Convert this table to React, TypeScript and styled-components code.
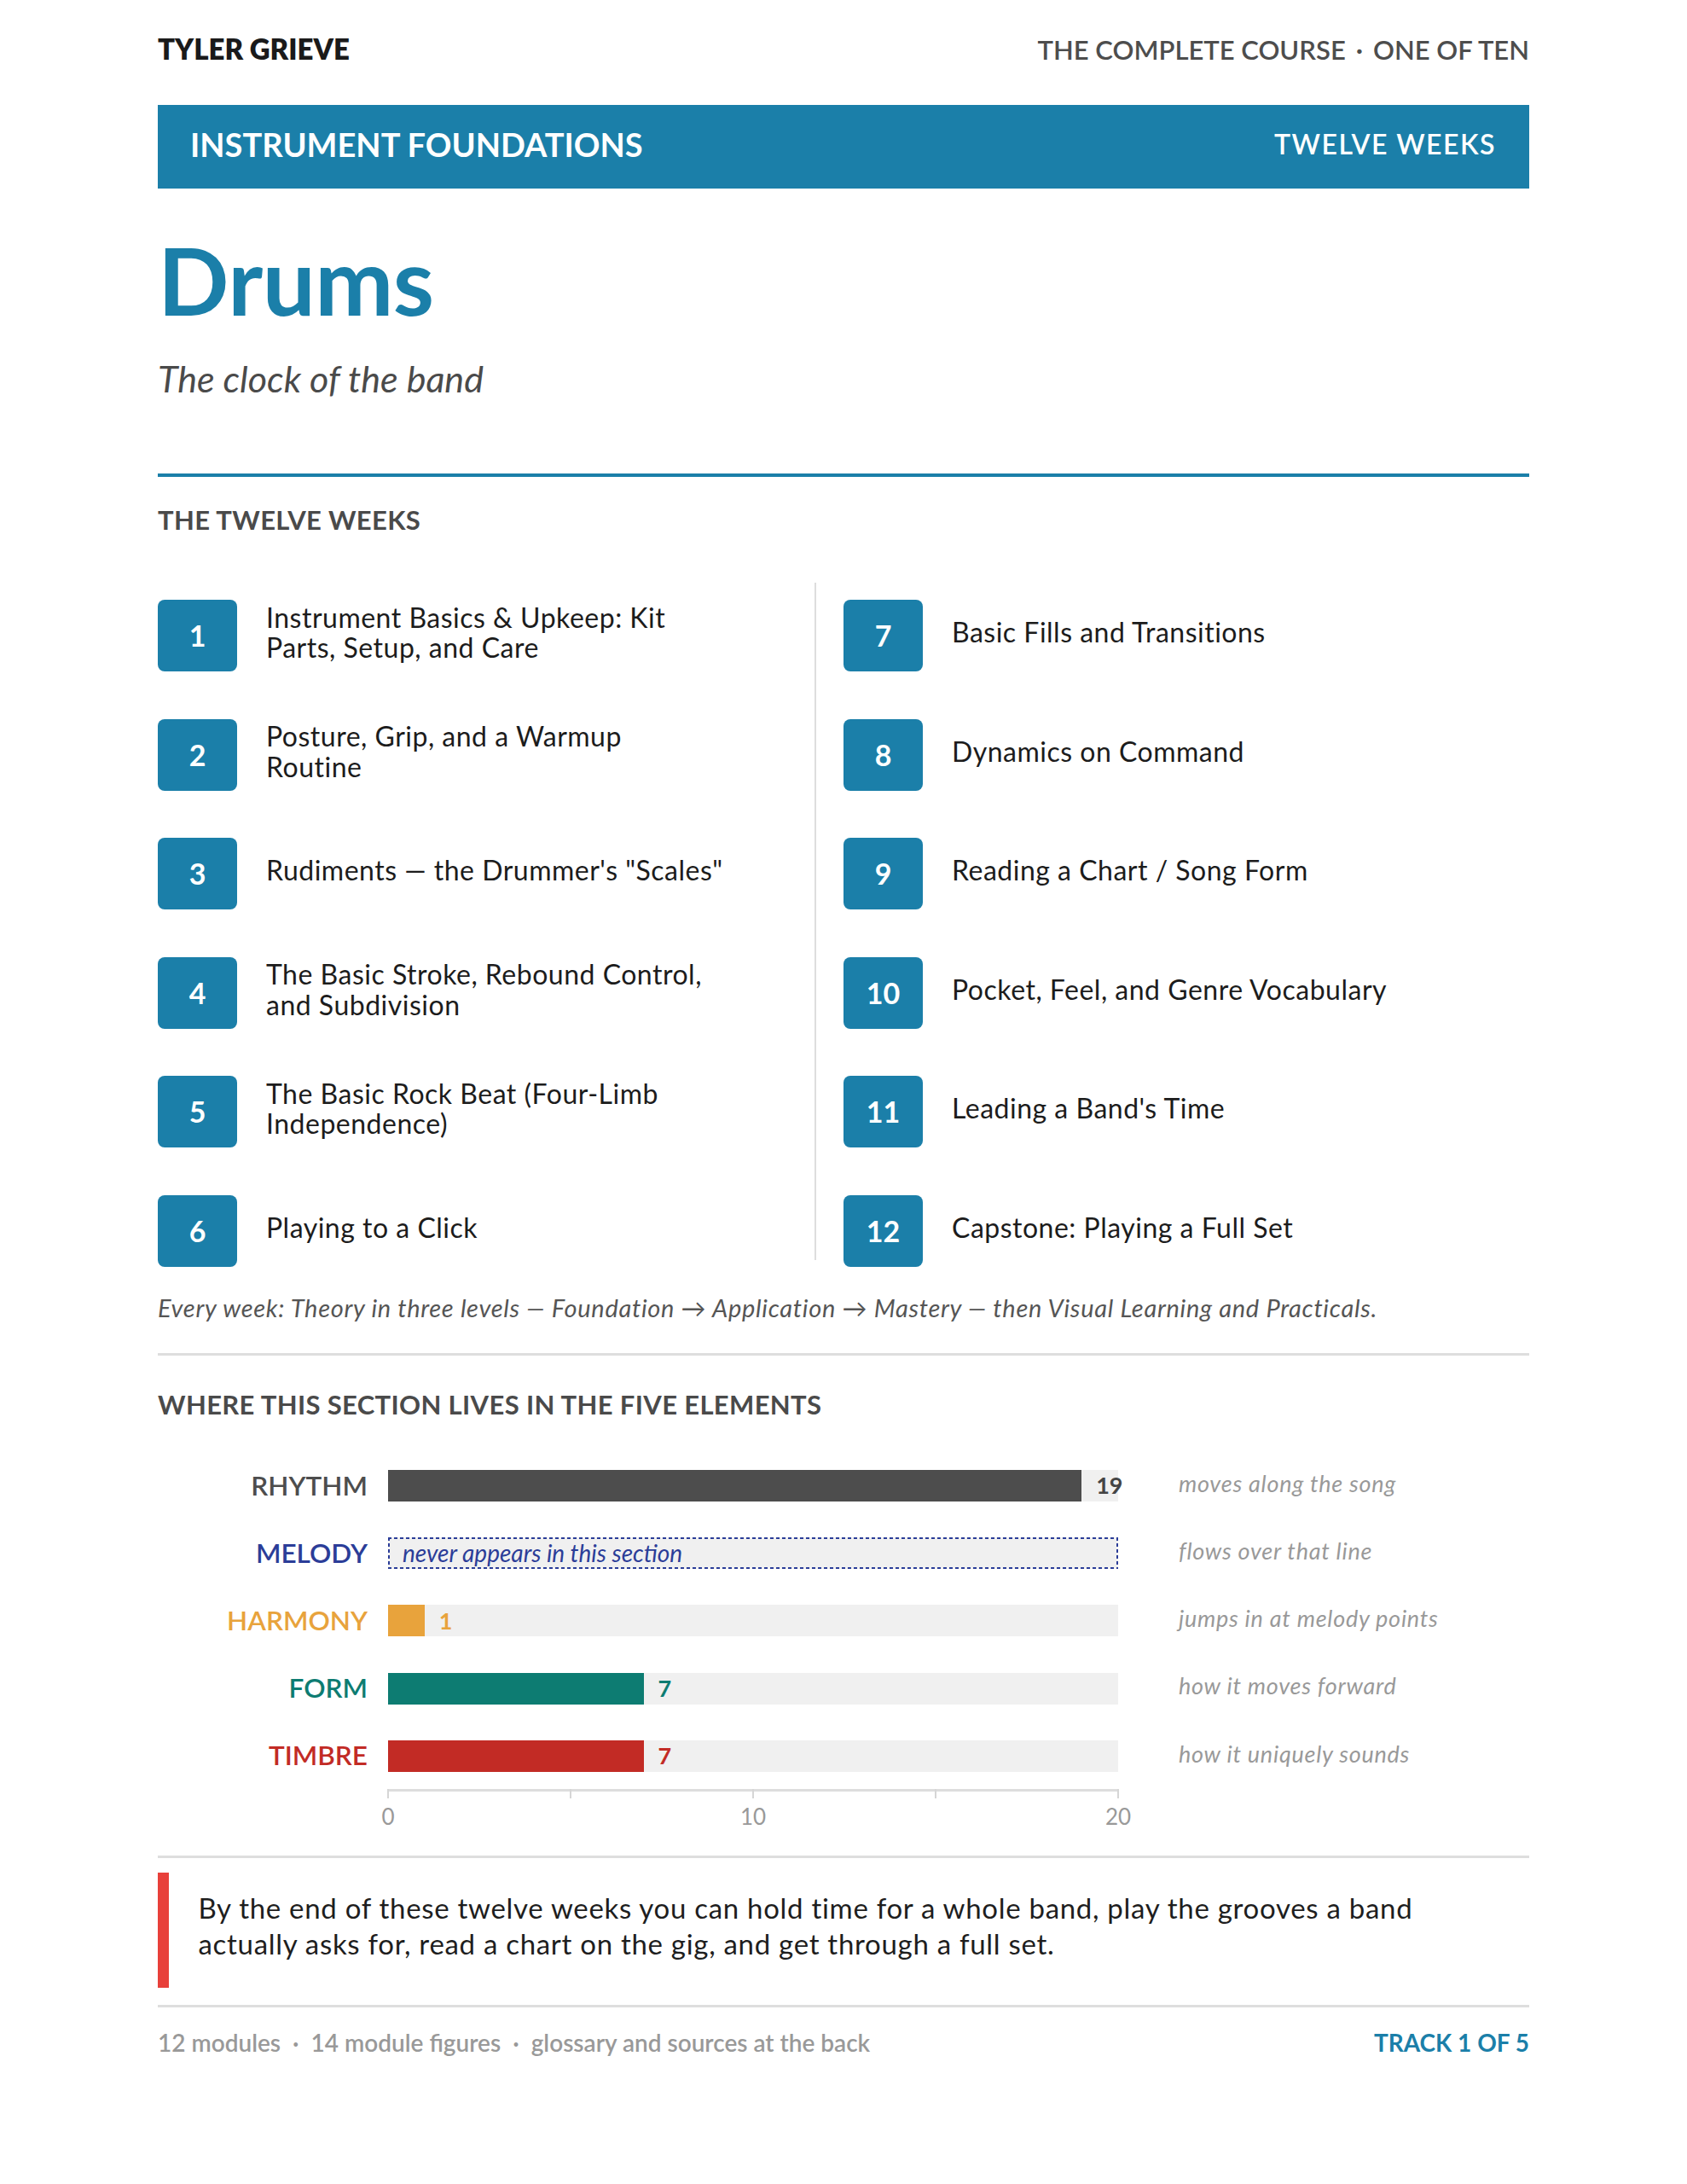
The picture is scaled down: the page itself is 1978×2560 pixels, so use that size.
import React from "react";
import styled, { createGlobalStyle } from "styled-components";

const BLUE = "#1b7fa9";

const Global = createGlobalStyle`
  html, body { margin: 0; padding: 0; background: #ffffff; }
  body { font-family: Lato, "Noto Sans", "Liberation Sans", sans-serif; color: #1c1c1c; }
  * { box-sizing: border-box; }
`;

const Page = styled.div`
  width: 1608px;
  margin: 0 auto;
  padding: 38px 0 80px;
  font-family: Lato, "Noto Sans", "Liberation Sans", sans-serif;
`;

const TopBar = styled.header`
  display: flex;
  justify-content: space-between;
  align-items: baseline;
  line-height: 1.2;
  height: 38.4px;
`;

const Brand = styled.div`
  font-size: 33px;
  font-weight: 800;
  color: #1a1a1a;
`;

const Series = styled.div`
  font-size: 31px;
  font-weight: 600;
  color: #4d4d4d;
`;

const Dot = styled.span<{ $gap?: number }>`
  display: inline-block;
  margin: 0 ${(p) => p.$gap ?? 12}px;
`;

const Banner = styled.div`
  margin-top: 47px;
  height: 98px;
  background: ${BLUE};
  display: flex;
  justify-content: space-between;
  align-items: center;
  padding: 0 39px 6px 38px;
  color: #ffffff;
  line-height: 1.2;
`;

const BannerText = styled.span<{ $weight: number; $size: number; $spacing?: number }>`
  font-size: ${(p) => p.$size}px;
  font-weight: ${(p) => p.$weight};
  letter-spacing: ${(p) => p.$spacing ?? 0}px;
`;

const Title = styled.h1`
  margin: 50.7px 0 0;
  font-size: 110px;
  line-height: 1;
  font-weight: 700;
  color: ${BLUE};
  letter-spacing: -0.5px;
`;

const Subtitle = styled.p`
  margin: 36px 0 0;
  font-size: 43px;
  line-height: 1.2;
  font-style: italic;
  font-weight: 400;
  color: #4a4a4a;
`;

const Rule = styled.hr<{ $color: string; $size: number; $top: number }>`
  margin: ${(p) => p.$top}px 0 0;
  border: 0;
  height: ${(p) => p.$size}px;
  background: ${(p) => p.$color};
`;

const SectionHeading = styled.h2<{ $top: number }>`
  margin: ${(p) => p.$top}px 0 0;
  font-size: 31px;
  line-height: 36px;
  font-weight: 700;
  letter-spacing: 0.35px;
  color: #4a4a4a;
`;

const Weeks = styled.div`
  margin-top: 56.6px;
  display: grid;
  grid-template-columns: 738px 2px 1fr;
  column-gap: 32px;
`;

const WeekColumn = styled.div`
  padding-top: 20px;
  display: flex;
  flex-direction: column;
  gap: 55.5px;
`;

const Divider = styled.div`
  background: #dddddd;
  margin-bottom: 7.5px;
`;

const WeekRow = styled.div`
  display: flex;
  align-items: center;
  gap: 34px;
  height: 84px;
`;

const Badge = styled.div`
  flex: 0 0 93px;
  height: 84px;
  border-radius: 8px;
  background: ${BLUE};
  color: #ffffff;
  display: flex;
  align-items: center;
  justify-content: center;
  font-size: 34px;
  font-weight: 700;
  line-height: 1;
`;

const WeekTitle = styled.div`
  margin-bottom: 8px;
  font-size: 32px;
  line-height: 35.7px;
  letter-spacing: 0.5px;
  font-weight: 400;
  color: #1c1c1c;
  white-space: pre-line;
`;

const Note = styled.p`
  margin: 31px 0 0;
  font-size: 29px;
  line-height: 34.8px;
  letter-spacing: 0.7px;
  font-style: italic;
  color: #555555;
`;

const Chart = styled.div`
  margin-top: 59px;
  display: flex;
  flex-direction: column;
  gap: 42.2px;
`;

const ChartRow = styled.div`
  display: grid;
  grid-template-columns: 246px 856px 1fr;
  column-gap: 24px;
  align-items: center;
  height: 37px;
`;

const ElementLabel = styled.div<{ $color: string }>`
  text-align: right;
  font-size: 31.5px;
  line-height: 1.2;
  font-weight: 600;
  color: ${(p) => p.$color};
`;

const Track = styled.div`
  position: relative;
  height: 37px;
  background: #f0f0f0;
`;

const Fill = styled.div<{ $color: string }>`
  height: 100%;
  background: ${(p) => p.$color};
`;

const Value = styled.span<{ $color: string }>`
  position: absolute;
  top: 50%;
  transform: translateY(-50%);
  margin-left: 17px;
  font-size: 27px;
  line-height: 1.2;
  font-weight: 700;
  color: ${(p) => p.$color};
`;

const EmptyTrack = styled.div<{ $color: string }>`
  height: 37px;
  display: flex;
  align-items: center;
  padding-left: 17px;
  font-size: 28px;
  font-style: italic;
  line-height: 1.2;
  color: ${(p) => p.$color};
  background:
    repeating-linear-gradient(90deg, ${(p) => p.$color} 0 4px, transparent 4px 7px) left top / 100% 2px no-repeat,
    repeating-linear-gradient(90deg, ${(p) => p.$color} 0 4px, transparent 4px 7px) left bottom / 100% 2px no-repeat,
    repeating-linear-gradient(180deg, ${(p) => p.$color} 0 4px, transparent 4px 7px) left top / 2px 100% no-repeat,
    repeating-linear-gradient(180deg, ${(p) => p.$color} 0 4px, transparent 4px 7px) right top / 2px 100% no-repeat,
    #f0f0f0;
`;

const Desc = styled.div`
  padding: 0 0 5px 47px;
  font-size: 27px;
  line-height: 1.2;
  letter-spacing: 0.75px;
  font-style: italic;
  color: #999999;
`;

const AxisRow = styled.div`
  display: grid;
  grid-template-columns: 246px 856px 1fr;
  column-gap: 24px;
  margin-top: -21.5px;
`;

const Axis = styled.div`
  grid-column: 2;
  position: relative;
  height: 48px;
  border-top: 3px solid #dddddd;
`;

const Tick = styled.div`
  position: absolute;
  top: -3px;
  width: 2px;
  height: 11px;
  margin-left: -1px;
  background: #d6d6d6;
`;

const TickLabel = styled.span`
  position: absolute;
  top: 14px;
  transform: translateX(-50%);
  font-size: 26px;
  line-height: 1.2;
  color: #999999;
`;

const Callout = styled.div`
  margin-top: 17px;
  border-left: 13px solid #e8403a;
  padding: 20px 0 31px 34.5px;
`;

const CalloutText = styled.p`
  margin: 0;
  max-width: 1480px;
  font-size: 33px;
  line-height: 42px;
  letter-spacing: 0.7px;
  color: #1e1e1e;
`;

const Footer = styled.footer`
  margin-top: 25px;
  display: flex;
  justify-content: space-between;
  align-items: baseline;
  font-size: 28px;
  line-height: 1.2;
  font-weight: 600;
`;

const FooterMeta = styled.div`
  color: #999999;
`;

const FooterTrack = styled.div`
  color: ${BLUE};
  font-weight: 700;
`;

const left = [
  "Instrument Basics & Upkeep: Kit\nParts, Setup, and Care",
  "Posture, Grip, and a Warmup\nRoutine",
  "Rudiments \u2014 the Drummer's \"Scales\"",
  "The Basic Stroke, Rebound Control,\nand Subdivision",
  "The Basic Rock Beat (Four-Limb\nIndependence)",
  "Playing to a Click",
];
const right = [
  "Basic Fills and Transitions",
  "Dynamics on Command",
  "Reading a Chart / Song Form",
  "Pocket, Feel, and Genre Vocabulary",
  "Leading a Band's Time",
  "Capstone: Playing a Full Set",
];

type El = { name: string; color: string; value: number | null; desc: string; valueColor: string };
const elements: El[] = [
  { name: "RHYTHM", color: "#4d4d4d", valueColor: "#444444", value: 19, desc: "moves along the song" },
  { name: "MELODY", color: "#2b3d98", valueColor: "#2b3d98", value: null, desc: "flows over that line" },
  { name: "HARMONY", color: "#e8a33c", valueColor: "#e8a33c", value: 1, desc: "jumps in at melody points" },
  { name: "FORM", color: "#0d7c72", valueColor: "#0d7c72", value: 7, desc: "how it moves forward" },
  { name: "TIMBRE", color: "#c22b25", valueColor: "#c22b25", value: 7, desc: "how it uniquely sounds" },
];
const MAX = 20;

function WeekList({ items, start }: { items: string[]; start: number }) {
  return (
    <WeekColumn>
      {items.map((t, i) => (
        <WeekRow key={i}>
          <Badge>{start + i}</Badge>
          <WeekTitle>{t}</WeekTitle>
        </WeekRow>
      ))}
    </WeekColumn>
  );
}

export default function App() {
  return (
    <>
      <Global />
      <Page>
        <TopBar>
          <Brand>TYLER GRIEVE</Brand>
          <Series>
            THE COMPLETE COURSE<Dot>·</Dot>ONE OF TEN
          </Series>
        </TopBar>

        <Banner>
          <BannerText $weight={700} $size={38}>INSTRUMENT FOUNDATIONS</BannerText>
          <BannerText $weight={600} $size={32} $spacing={1.5}>TWELVE WEEKS</BannerText>
        </Banner>

        <Title>Drums</Title>
        <Subtitle>The clock of the band</Subtitle>

        <Rule $color={BLUE} $size={4} $top={85} />

        <SectionHeading $top={32}>THE TWELVE WEEKS</SectionHeading>

        <Weeks>
          <WeekList items={left} start={1} />
          <Divider />
          <WeekList items={right} start={7} />
        </Weeks>

        <Note>
          Every week: Theory in three levels — Foundation → Application → Mastery — then Visual Learning and Practicals.
        </Note>

        <Rule $color="#dedede" $size={3} $top={35} />

        <SectionHeading $top={39}>WHERE THIS SECTION LIVES IN THE FIVE ELEMENTS</SectionHeading>

        <Chart>
          {elements.map((e) => (
            <ChartRow key={e.name}>
              <ElementLabel $color={e.color}>{e.name}</ElementLabel>
              {e.value === null ? (
                <EmptyTrack $color={e.color}>never appears in this section</EmptyTrack>
              ) : (
                <Track>
                  <Fill $color={e.color} style={{ width: `${(e.value / MAX) * 100}%` }} />
                  <Value $color={e.valueColor} style={{ left: `${(e.value / MAX) * 100}%` }}>
                    {e.value}
                  </Value>
                </Track>
              )}
              <Desc>{e.desc}</Desc>
            </ChartRow>
          ))}
          <AxisRow>
            <Axis>
              {[0, 5, 10, 15, 20].map((t) => (
                <Tick key={t} style={{ left: `${(t / MAX) * 100}%` }} />
              ))}
              {[0, 10, 20].map((t) => (
                <TickLabel key={t} style={{ left: `${(t / MAX) * 100}%` }}>
                  {t}
                </TickLabel>
              ))}
            </Axis>
          </AxisRow>
        </Chart>

        <Rule $color="#dedede" $size={3} $top={30} />

        <Callout>
          <CalloutText>
            By the end of these twelve weeks you can hold time for a whole band, play the grooves a band actually asks for, read a chart on the gig, and get through a full set.
          </CalloutText>
        </Callout>

        <Rule $color="#dedede" $size={3} $top={20} />

        <Footer>
          <FooterMeta>
            12 modules<Dot $gap={14}>·</Dot>14 module figures<Dot $gap={14}>·</Dot>glossary and sources at the back
          </FooterMeta>
          <FooterTrack>TRACK 1 OF 5</FooterTrack>
        </Footer>
      </Page>
    </>
  );
}
